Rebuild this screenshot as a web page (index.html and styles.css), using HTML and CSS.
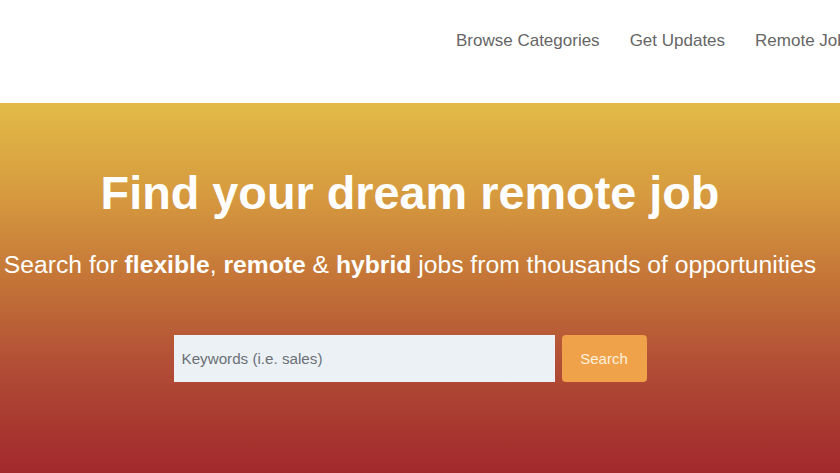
FILE: index.html
```html
<!DOCTYPE html>
<html>
<head>
<meta charset="utf-8">
<link rel="stylesheet" href="styles.css">
</head>
<body>
<header class="topbar">
  <nav class="nav">
    <a class="nav-link" href="#">Browse Categories</a>
    <a class="nav-link" href="#">Get Updates</a>
    <a class="nav-link" href="#">Remote Jobs</a>
  </nav>
</header>
<section class="hero">
  <div class="hero-inner">
    <h1 class="hero-title">Find your dream remote job</h1>
    <p class="hero-sub">Search for <b>flexible</b>, <b>remote</b> &amp; <b>hybrid</b> jobs from thousands of opportunities</p>
    <form class="search">
      <input class="search-input" type="text" placeholder="Keywords (i.e. sales)">
      <button class="search-btn" type="button">Search</button>
    </form>
  </div>
</section>
</body>
</html>
```
FILE: styles.css
```css
* { box-sizing: border-box; }
html, body { margin: 0; padding: 0; overflow: hidden; }
body {
  font-family: "Liberation Sans", Arial, sans-serif;
  width: 840px;
  height: 473px;
  background: #a2282b;
}
.topbar {
  height: 103px;
  background: #fff;
  display: flex;
  align-items: flex-start;
  overflow: hidden;
}
.nav {
  display: flex;
  gap: 30px;
  margin-left: 456px;
  padding-top: 31px;
  white-space: nowrap;
  flex-shrink: 0;
}
.nav-link {
  color: #666;
  font-size: 17px;
  text-decoration: none;
  line-height: 20px;
}
.hero {
  height: 370px;
  background: linear-gradient(to bottom, #e2bb47 0%, #d69a3f 25%, #c47437 48%, #b24f36 70%, #a2282c 100%);
}
.hero-inner {
  width: 820px;
  display: flex;
  flex-direction: column;
  align-items: center;
  padding-top: 64px;
}
.hero-title {
  margin: 0;
  color: #fff;
  font-size: 46.8px;
  font-weight: bold;
  line-height: 52px;
  white-space: nowrap;
}
.hero-sub {
  margin: 31px 0 0;
  color: #fff;
  font-size: 24.7px;
  line-height: 30px;
  white-space: nowrap;
}
.search {
  display: flex;
  gap: 7px;
  margin-top: 55px;
}
.search-input {
  width: 381px;
  height: 47px;
  border: none;
  background: #ebf1f5;
  padding: 0 8px;
  font-family: "Liberation Sans", Arial, sans-serif;
  font-size: 15.2px;
  color: #333;
  outline: none;
}
.search-input::placeholder { color: #6c7076; }
.search-btn {
  width: 85px;
  height: 47px;
  border: none;
  border-radius: 4px;
  background: #f0a24a;
  color: #fdf0dc;
  font-family: "Liberation Sans", Arial, sans-serif;
  font-size: 15px;
}
```
